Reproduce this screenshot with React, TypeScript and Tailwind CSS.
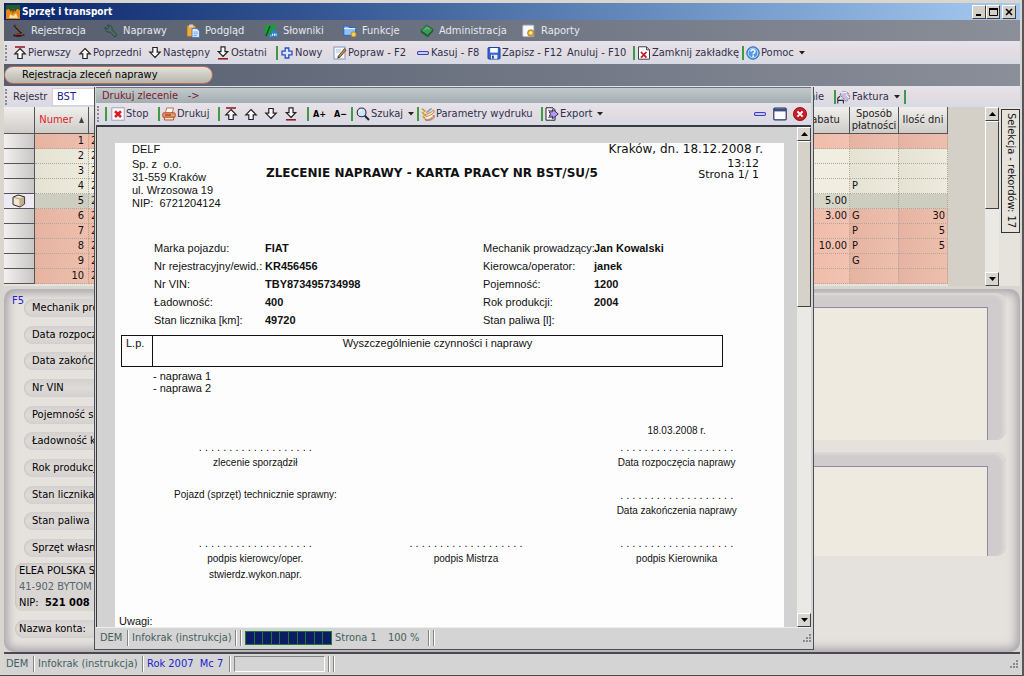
import type { ReactNode } from "react";

/* ---------- icons ---------- */

function Svg({ size = 14, children }: { size?: number; children: ReactNode }) {
  return (
    <svg width={size} height={size} viewBox="0 0 14 14" className="shrink-0" aria-hidden="true">
      {children}
    </svg>
  );
}

const ARROW_UP = "M7 2.5 L12.2 7.8 H9.2 V12.5 H4.8 V7.8 H1.8 Z";
const ARROW_DOWN = "M7 11.5 L12.2 6.2 H9.2 V1.5 H4.8 V6.2 H1.8 Z";

const UpIcon = () => (
  <Svg>
    <path d={ARROW_UP} fill="#fff" stroke="#222" strokeWidth="1.2" />
  </Svg>
);
const DownIcon = () => (
  <Svg>
    <path d={ARROW_DOWN} fill="#fff" stroke="#222" strokeWidth="1.2" />
  </Svg>
);
const FirstIcon = () => (
  <Svg>
    <path d={ARROW_UP} fill="#fff" stroke="#222" strokeWidth="1.2" />
    <path d="M2 1 H12" stroke="#9a1c2a" strokeWidth="1.6" />
  </Svg>
);
const LastIcon = () => (
  <Svg>
    <path d="M7 10.5 L11.7 5.7 H9 V.8 H5 V5.7 H2.3 Z" fill="#fff" stroke="#222" strokeWidth="1.2" />
    <path d="M2 12.8 H12" stroke="#9a1c2a" strokeWidth="1.6" />
  </Svg>
);
const PlusIcon = () => (
  <Svg>
    <path d="M5.2 2 H8.8 V5.2 H12 V8.8 H8.8 V12 H5.2 V8.8 H2 V5.2 H5.2 Z" fill="#d9e6ff" stroke="#2a4fc4" strokeWidth="1.3" />
  </Svg>
);
const MinusIcon = () => (
  <Svg>
    <rect x="1.5" y="5.5" width="11" height="3" rx="1.2" fill="#c8ccff" stroke="#3b3fc0" strokeWidth="1.1" />
  </Svg>
);
const EditIcon = () => (
  <Svg>
    <rect x="1" y="1" width="11" height="12" fill="#f3f8ff" stroke="#8496b4" />
    <path d="M3 4 H8 M3 6 H7" stroke="#9fc0e8" />
    <path d="M5 10.5 L11.5 2.5 L13.2 4 L6.8 11.5 Z" fill="#c9853c" stroke="#59402a" strokeWidth=".8" />
    <path d="M5 10.5 L4.2 12.4 L6.8 11.5 Z" fill="#222" />
  </Svg>
);
const SaveIcon = () => (
  <Svg>
    <rect x="1" y="1.5" width="12" height="11.5" rx="1" fill="#3566cf" stroke="#1f429b" />
    <rect x="3.2" y="2" width="7.6" height="4.6" fill="#fff" />
    <rect x="4" y="8.8" width="6.4" height="4" fill="#e8eefc" />
    <rect x="5" y="9.6" width="1.8" height="3" fill="#1f429b" />
  </Svg>
);
const ClosePageIcon = () => (
  <Svg>
    <path d="M1.5 .8 H9.5 L12.5 3.8 V13.2 H1.5 Z" fill="#fff" stroke="#40414c" />
    <path d="M9.5 .8 V3.8 H12.5" fill="none" stroke="#40414c" />
    <path d="M4 6 L9.5 11.6 M9.5 6 L4 11.6" stroke="#c01822" strokeWidth="1.7" />
  </Svg>
);
const HelpIcon = () => (
  <Svg>
    <circle cx="7" cy="7" r="6.2" fill="#4c9be8" stroke="#2a5da8" strokeWidth="1" />
    <circle cx="7" cy="7" r="4.9" fill="none" stroke="#d6ebff" strokeWidth=".8" />
    <path d="M5 5.6 C5 3.2 9 3.2 9 5.5 C9 6.9 7.1 6.8 7.1 8.4" fill="none" stroke="#fff" strokeWidth="1.4" />
    <circle cx="7.1" cy="10.2" r=".9" fill="#fff" />
  </Svg>
);
const PenIcon = () => (
  <Svg>
    <path d="M2.2 1.2 L9.6 8.8" stroke="#1c1412" strokeWidth="2.2" />
    <path d="M3 1.4 L9.8 8.2" stroke="#d07a4a" strokeWidth="1" />
    <path d="M.8 12 C3 8.6 9 8.4 13 11 C10 13.2 4 13.2 .8 12 Z" fill="#2a1713" />
    <path d="M3 11 C5 9.8 8 9.8 11 11" stroke="#c8502f" fill="none" />
  </Svg>
);
const WrenchIcon = () => (
  <Svg>
    <path d="M1.2 3.2 L3.2 5 L5 3.4 L3.4 1.4 C6.8 .6 8.8 3 8 5.6 L13 10.8 L11 13 L5.8 8 C3.4 8.8 .8 6.6 1.2 3.2 Z" fill="#4f6b66" stroke="#25423b" strokeWidth=".9" />
  </Svg>
);
const ClipboardIcon = () => (
  <Svg>
    <rect x="1" y="1.6" width="8.4" height="11" rx="1" fill="#f0ae38" stroke="#a4661c" strokeWidth=".8" />
    <rect x="3" y=".4" width="4.4" height="2.8" rx="1" fill="#cfd4dc" />
    <path d="M6 4.6 H11 L13.4 7 V13.4 H6 Z" fill="#e8f2ff" stroke="#3f72c8" strokeWidth=".9" />
    <path d="M7.4 8 H12 M7.4 9.8 H12 M7.4 11.6 H11" stroke="#5a8fe0" strokeWidth=".8" />
  </Svg>
);
const DictIcon = () => (
  <Svg>
    <path d="M.6 1 H13.4 L6.6 12.6 L.6 9 Z" fill="#1f9a3c" />
    <path d="M2 12 L6 2" stroke="#0b4f2a" strokeWidth="1.4" />
    <path d="M4.6 13.4 L8 6.4 H13.6 V13.4 Z" fill="#2c7fc8" />
    <path d="M6.4 11.8 H7.4 M8.6 11.8 V9.6 M10.4 11.8 V9.6 M12 11.8 V9.6" stroke="#fff" />
  </Svg>
);
const FunctionsIcon = () => (
  <Svg>
    <path d="M.8 2 H5 L6 3.4 H12.6 V11.4 H.8 Z" fill="#8fc0f8" stroke="#2b62c4" />
    <path d="M1 4.6 H12.4" stroke="#e4f1ff" />
    <circle cx="10.6" cy="10.4" r="2.6" fill="#f2cf5a" stroke="#a8761c" strokeWidth=".8" />
  </Svg>
);
const BookIcon = () => (
  <Svg>
    <path d="M.8 6.6 L6.4 1.2 L13.2 5.4 L7.8 11.4 Z" fill="#3d9a56" stroke="#165a2c" strokeWidth=".9" />
    <path d="M.8 6.6 V8.4 L7.8 13.2 L13.2 7.2 V5.4 L7.8 11.4 Z" fill="#1d5c34" />
    <path d="M4.4 6 L7 3.6 L9.6 5.2" fill="none" stroke="#8fd0a0" strokeWidth=".8" />
  </Svg>
);
const ReportIcon = () => (
  <Svg>
    <rect x=".8" y="1.2" width="11" height="11.4" rx="1" fill="#f7f9ff" stroke="#b4bccc" strokeWidth=".8" />
    <circle cx="8.8" cy="9" r="3.2" fill="#f0b838" stroke="#a06a1c" strokeWidth=".8" />
    <circle cx="8.6" cy="8.8" r="1.2" fill="#fff3c4" />
  </Svg>
);
const StopIcon = () => (
  <Svg>
    <rect x=".8" y=".8" width="12.4" height="12.4" fill="#fff" stroke="#9aa2b4" />
    <path d="M4 4.2 L10 10 M10 4.2 L4 10" stroke="#d81e28" strokeWidth="2.6" />
  </Svg>
);
const PrinterIcon = () => (
  <Svg>
    <path d="M3.4 6 L4.6 1 H11.4 L10.4 6 Z" fill="#fff" stroke="#c2603c" strokeWidth=".9" />
    <rect x=".8" y="5.8" width="12.4" height="4.6" rx="1.2" fill="#ee9a72" stroke="#a84824" strokeWidth=".9" />
    <path d="M2.4 10.2 H11.6 V13 H2.4 Z" fill="#fde2c8" stroke="#a84824" strokeWidth=".9" />
    <path d="M3 8 H9" stroke="#7a2c10" />
  </Svg>
);
const SearchIcon = () => (
  <Svg>
    <circle cx="5.6" cy="5.4" r="4.4" fill="#cfe3fa" stroke="#2b3140" strokeWidth="1.1" />
    <path d="M3.4 5 C3.6 3.6 4.6 3 5.8 3" fill="none" stroke="#fff" />
    <path d="M8.8 8.8 L13 13" stroke="#1d2a4a" strokeWidth="2" />
  </Svg>
);
const ParamsIcon = () => (
  <Svg>
    <path d="M1 1.6 L4.4 4.6 M1.2 5 L4 8.4 M2 9 L4 12" stroke="#d4a020" strokeWidth="1.6" />
    <path d="M4 8 C6 6.6 10 6 12.6 3 L13.2 5 C11 8 8 9.2 5 9.4 Z" fill="#f6e3a4" stroke="#b8641c" strokeWidth=".7" />
    <path d="M4 12.8 C7 13.4 11 12 13 8.2 L13.2 10.6 C11 13.4 7 14 4 12.8 Z" fill="#f3c0a8" stroke="#b04a2c" strokeWidth=".7" />
    <path d="M5.4 5.6 L10.6 1.4" stroke="#8898b8" strokeWidth="1.4" />
    <path d="M5.6 11 L11 8.6" stroke="#fff" />
  </Svg>
);
const ExportIcon = () => (
  <Svg>
    <path d="M1 .8 H8 L10 2.8 V13.2 H1 Z" fill="#fff" stroke="#222" />
    <path d="M3 3.4 H7 M3 10.6 H8" stroke="#555" strokeWidth=".8" />
    <path d="M4 4.8 H7.6 V2.2 L13.2 7 L7.6 11.8 V9.2 H4 L5.6 7 Z" fill="#b59cf0" stroke="#2a1a5c" strokeWidth=".9" />
  </Svg>
);
const InvoiceIcon = () => (
  <Svg>
    <path d="M3 5 C4 1 9 .4 11.4 3.4 L13 8 L9 11.6 L6 8 Z" fill="#c6bce0" stroke="#6a5f86" strokeWidth=".8" strokeDasharray="2 1" />
    <path d="M.8 13.4 V8 L3 6.2 M.8 10.4 H6.4 V13.4" fill="none" stroke="#2a2438" strokeWidth="1.1" />
    <path d="M4 3 L10 2 M9 4.5 L12 8" stroke="#fff" />
  </Svg>
);
const WindowIcon = () => (
  <Svg>
    <rect x=".8" y="1.2" width="12.4" height="11.6" rx="1" fill="#fbfcff" stroke="#2a3560" strokeWidth="1.2" />
    <path d="M1 3.2 H13" stroke="#3b4d88" strokeWidth="2.4" />
  </Svg>
);
const CloseRedIcon = () => (
  <Svg>
    <circle cx="7" cy="7" r="6.6" fill="#c81e28" stroke="#7c0e16" strokeWidth=".8" />
    <path d="M4.4 4.4 L9.6 9.6 M9.6 4.4 L4.4 9.6" stroke="#fff" strokeWidth="2" />
  </Svg>
);
const BoxIcon = () => (
  <Svg>
    <path d="M1 3.2 L6 1 L12.6 2.8 V10 L8 13 L1 10.6 Z" fill="#f2e8d2" stroke="#2b2620" />
    <path d="M1 3.2 L8 5 V13 M8 5 L12.6 2.8" fill="none" stroke="#8b7c60" strokeWidth=".7" />
    <path d="M8.4 5.2 L12.2 3.4 V9.8 L8.4 12.2 Z" fill="#c2ac84" />
  </Svg>
);
const AppIcon = () => (
  <Svg>
    <rect width="14" height="14" fill="#e8861c" />
    <path d="M0 0 H14 V5 L11 4 L9 7 L7 3 L5 7 L3 4 L0 5 Z" fill="#215c2a" />
    <path d="M3 13 L4 9 L7 11 L10 8 L12 13 Z" fill="#fbe49a" />
    <path d="M6 4 L7 9 L8 4 Z" fill="#5a2c10" />
  </Svg>
);

/* ---------- small parts ---------- */

const Grip = () => (
  <span className="ml-px mr-1 h-4 w-1 shrink-0 border-l-2 border-dotted border-[#8a8a94]" aria-hidden="true" />
);
const Sep = () => <span className="h-3.5 w-0.5 shrink-0 bg-[#3f9a48]" aria-hidden="true" />;
const Caret = () => (
  <svg width="6" height="4" viewBox="0 0 6 4" className="ml-1 shrink-0" aria-hidden="true">
    <path d="M0 0 H6 L3 3.6 Z" fill="#222" />
  </svg>
);
const StatusSep = () => <span className="h-4 w-0.5 shrink-0 border-l border-r border-l-[#85857f] border-r-white" aria-hidden="true" />;

function Tool({ icon, label, width, caret, name }: { icon?: ReactNode; label?: string; width: string; caret?: boolean; name?: string }) {
  return (
    <button type="button" aria-label={name} className={`flex shrink-0 items-center gap-px whitespace-nowrap text-left ${width}`}>
      {icon}
      {label && <span>{label}</span>}
      {caret && <Caret />}
    </button>
  );
}

function ScrollButton({ down }: { down?: boolean }) {
  return (
    <button
      type="button"
      aria-label={down ? "W dół" : "W górę"}
      className="flex h-3.5 w-full shrink-0 items-center justify-center border border-b-[#404040] border-l-white border-r-[#404040] border-t-white bg-[#d8d5ce]"
    >
      <svg width="7" height="4" viewBox="0 0 7 4" aria-hidden="true">
        <path d={down ? "M0 0 H7 L3.5 4 Z" : "M0 4 H7 L3.5 0 Z"} fill="#000" />
      </svg>
    </button>
  );
}

function ScrollBar({ thumb }: { thumb: string }) {
  return (
    <div className="flex w-3.5 shrink-0 flex-col bg-[#ebe9e5]">
      <ScrollButton />
      <div className={`border border-b-[#404040] border-l-white border-r-[#404040] border-t-white bg-[#d6d2ca] ${thumb}`} />
      <div className="flex-1" />
      <ScrollButton down />
    </div>
  );
}

function ResizeGrip() {
  return (
    <svg width="10" height="10" viewBox="0 0 10 10" className="shrink-0" aria-hidden="true">
      <path d="M8 1h2v2h-2z M5 4h2v2h-2z M8 4h2v2h-2z M2 7h2v2h-2z M5 7h2v2h-2z M8 7h2v2h-2z" fill="#8a8a92" />
    </svg>
  );
}

/* ---------- main window ---------- */

const MENU = [
  { label: "Rejestracja", icon: <PenIcon />, width: "w-[92px]" },
  { label: "Naprawy", icon: <WrenchIcon />, width: "w-[82px]" },
  { label: "Podgląd", icon: <ClipboardIcon />, width: "w-[78px]" },
  { label: "Słowniki", icon: <DictIcon />, width: "w-[79px]" },
  { label: "Funkcje", icon: <FunctionsIcon />, width: "w-[77px]" },
  { label: "Administracja", icon: <BookIcon />, width: "w-[102px]" },
  { label: "Raporty", icon: <ReportIcon />, width: "w-[80px]" },
];

function TitleBar() {
  const btn =
    "flex h-3.5 w-[14px] items-center justify-center border border-b-[#404040] border-l-white border-r-[#404040] border-t-white bg-[#d4d0c8]";
  return (
    <header className="flex h-[17px] items-center bg-linear-to-r from-[#0a246a] to-[#a6caf0] pl-0.5 pr-1">
      <AppIcon />
      <h1 className="ml-0.5 flex-1 text-[10px] font-bold text-white">Sprzęt i transport</h1>
      <button type="button" aria-label="Minimalizuj" className={btn}>
        <svg width="8" height="8" aria-hidden="true"><path d="M1 7 H6" stroke="#000" strokeWidth="2" /></svg>
      </button>
      <button type="button" aria-label="Maksymalizuj" className={btn}>
        <svg width="9" height="8" aria-hidden="true"><path d="M.5 1 H8.5 V7.5 H.5 Z" fill="none" stroke="#000" /><path d="M0 1 H9" stroke="#000" strokeWidth="2" /></svg>
      </button>
      <button type="button" aria-label="Zamknij" className={`ml-0.5 ${btn}`}>
        <svg width="8" height="8" aria-hidden="true"><path d="M1 1 L7 7 M7 1 L1 7" stroke="#000" strokeWidth="1.6" /></svg>
      </button>
    </header>
  );
}

const BAR = "flex shrink-0 items-center bg-linear-to-b from-[#e6e3ec] via-[#e3dce0] to-[#d6dae6] text-[#2b3150]";

function MainToolbar() {
  return (
    <div className={`h-[23px] ${BAR}`}>
      <Grip />
      <Tool icon={<FirstIcon />} label="Pierwszy" width="w-[65px]" />
      <Tool icon={<UpIcon />} label="Poprzedni" width="w-[70px]" />
      <Tool icon={<DownIcon />} label="Następny" width="w-[68px]" />
      <Tool icon={<LastIcon />} label="Ostatni" width="w-[60px]" />
      <Sep />
      <Tool icon={<PlusIcon />} label="Nowy" width="ml-0.5 w-[53px]" />
      <Tool icon={<EditIcon />} label="Popraw - F2" width="w-[83px]" />
      <Tool icon={<MinusIcon />} label="Kasuj - F8" width="w-[71px]" />
      <Tool icon={<SaveIcon />} label="Zapisz - F12" width="w-[80px]" />
      <Tool label="Anuluj - F10" width="w-[66px]" />
      <Sep />
      <Tool icon={<ClosePageIcon />} label="Zamknij zakładkę" width="ml-0.5 w-[105px]" />
      <Sep />
      <Tool icon={<HelpIcon />} label="Pomoc" width="ml-0.5" caret />
    </div>
  );
}

type Row = { n: number; discount?: string; pay?: string; days?: string; tone: "salmon" | "cream" | "selected" };

const ROWS: Row[] = [
  { n: 1, tone: "salmon" },
  { n: 2, tone: "cream" },
  { n: 3, tone: "cream" },
  { n: 4, tone: "cream", pay: "P" },
  { n: 5, tone: "selected", discount: "5.00" },
  { n: 6, tone: "salmon", discount: "3.00", pay: "G", days: "30" },
  { n: 7, tone: "salmon", pay: "P", days: "5" },
  { n: 8, tone: "salmon", discount: "10.00", pay: "P", days: "5" },
  { n: 9, tone: "salmon", pay: "G" },
  { n: 10, tone: "salmon" },
];

const TONE = {
  salmon: { a: "bg-linear-to-r from-[#f0baa6] to-[#f2c2b2]", b: "bg-linear-to-r from-[#e6b3a0] to-[#eebfae]" },
  cream: { a: "bg-[#f0eee0]", b: "bg-linear-to-r from-[#e4e2d3] to-[#edebdd]" },
  selected: { a: "bg-[#d6d6c8]", b: "bg-[#cdcdc0]" },
};

function OrdersTable() {
  const cell = "overflow-hidden border-b border-r border-dotted border-[#b0a79c] p-0 text-[#111]";
  const head =
    "h-[27px] overflow-hidden border-b border-r border-[#55555a] bg-linear-to-b from-[#f0efec] to-[#cfccc8] p-0 text-center font-normal leading-[12px]";
  return (
    <table className="w-full table-fixed border-separate border-spacing-0">
      <colgroup>
        <col className="w-[31px]" />
        <col className="w-[54px]" />
        <col />
        <col className="w-[52px]" />
        <col className="w-[49px]" />
        <col className="w-[49px]" />
      </colgroup>
      <thead>
        <tr>
          <th className={head} aria-label="Wybór" />
          <th className={`${head} text-[#e01c1c]`}>
            <span className="flex items-center justify-center gap-1.5">
              Numer
              <svg width="5" height="6" viewBox="0 0 5 6" aria-hidden="true"><path d="M0 6 L2.5 0 L5 6 Z" fill="#444" /></svg>
            </span>
          </th>
          <th className={head} aria-label="Data" />
          <th className={`${head} text-[#222]`}>rabatu</th>
          <th className={`${head} text-[#222]`}>Sposób płatności</th>
          <th className={`${head} text-[#222]`}>Ilość dni</th>
        </tr>
      </thead>
      <tbody>
        {ROWS.map((r) => (
          <tr key={r.n} className="h-[15px] leading-[14px]">
            <td className="border-b border-r border-[#55555a] bg-linear-to-r from-[#f2f1ef] to-[#c9c7c6] p-0">
              {r.tone === "selected" && (
                <span className="flex h-3.5 items-center justify-center bg-[#eeeaf4]"><BoxIcon /></span>
              )}
            </td>
            <td className={`${cell} pr-1 text-right ${TONE[r.tone].b}`}>{r.n}</td>
            <td className={`${cell} pl-0.5 ${TONE[r.tone].a}`}>2</td>
            <td className={`${cell} pr-0.5 text-right ${TONE[r.tone].a}`}>{r.discount}</td>
            <td className={`${cell} pl-0.5 ${TONE[r.tone].b}`}>{r.pay}</td>
            <td className={`${cell} pr-0.5 text-right ${TONE[r.tone].b}`}>{r.days}</td>
          </tr>
        ))}
      </tbody>
    </table>
  );
}

const FIELDS = [
  "Mechanik prowadzący",
  "Data rozpoczęcia",
  "Data zakończenia",
  "Nr VIN",
  "Pojemność silnika",
  "Ładowność kg",
  "Rok produkcji",
  "Stan licznika",
  "Stan paliwa",
  "Sprzęt własny",
];

const PILL = "rounded-l-full bg-linear-to-b from-[#d5d1d0] via-[#dedad7] to-[#d5d1d0] shadow-[inset_1px_0_1px_#c6c2c2]";
const MEMO = "flex rounded-[10px] bg-[#d0cccd] pr-[18px] pt-3.5 shadow-[inset_-3px_2px_3px_#dedad8,inset_-1px_0_0_#c4c0c0]";
const MEMO_FIELD = "flex-1 resize-none border-r border-t border-[#8f8aa4] bg-[#eeeadf] outline-none";

function DetailsPanel() {
  return (
    <section className="mt-[3px] flex flex-1 rounded-[10px] bg-[#e5e1dc] shadow-[inset_0_0_9px_4px_#a9a7ae]">
      <div className="relative flex w-[180px] shrink-0 flex-col pb-3.5 pl-[11px] pt-2.5 text-black">
        <span className="absolute left-2 top-1 leading-4 text-[#2222d0]">F5</span>
        <div className="ml-[9px] flex h-[258px] flex-col justify-between">
          {FIELDS.map((f) => (
            <div key={f} className={`h-[18px] overflow-hidden whitespace-nowrap pl-2 leading-[18px] ${PILL}`}>{f}</div>
          ))}
        </div>
        <div className="mt-1.5 rounded-lg bg-[#d9d5d3] pl-1 leading-4 shadow-[inset_1px_1px_2px_#c6c2c2]">
          <p>ELEA POLSKA S</p>
          <p className="text-[#56656c]">41-902 BYTOM</p>
          <p className="whitespace-pre">NIP:  <b>521 008</b></p>
        </div>
        <div className={`mt-[9px] h-[18px] pl-1 leading-[18px] ${PILL}`}>Nazwa konta:</div>
      </div>
      <div className="flex flex-1 flex-col pb-[96px] pr-3.5 pt-1">
        <div className={`h-[147px] shrink-0 ${MEMO}`}>
          <textarea aria-label="Opis" className={MEMO_FIELD} />
        </div>
        <div className={`mt-3 flex-1 ${MEMO}`}>
          <textarea aria-label="Uwagi" className={MEMO_FIELD} />
        </div>
      </div>
    </section>
  );
}

/* ---------- print preview ---------- */

const VEHICLE = [
  ["Marka pojazdu:", "FIAT"],
  ["Nr rejestracyjny/ewid.:", "KR456456"],
  ["Nr VIN:", "TBY873495734998"],
  ["Ładowność:", "400"],
  ["Stan licznika [km]:", "49720"],
];
const PEOPLE = [
  ["Mechanik prowadzący:", "Jan Kowalski"],
  ["Kierowca/operator:", "janek"],
  ["Pojemność:", "1200"],
  ["Rok produkcji:", "2004"],
  ["Stan paliwa [l]:", ""],
];

function Facts({ rows }: { rows: string[][] }) {
  return (
    <dl className="grid grid-cols-[111px_1fr] leading-[18px]">
      {rows.map(([k, v]) => (
        <div key={k} className="contents">
          <dt className="whitespace-nowrap">{k}</dt>
          <dd className="font-bold">{v}</dd>
        </div>
      ))}
    </dl>
  );
}

const DOTS = ". . . . . . . . . . . . . . . . . . .";
const Dots = () => <p className="whitespace-nowrap pb-0.5 text-[11px] leading-[14px]">{DOTS}</p>;

function Document() {
  return (
    <article className="ml-[18px] mr-[13px] mt-4 flex-1 bg-[#fdfdfd] font-['Liberation_Sans',sans-serif] text-[11px] text-[#111]">
      <div className="flex h-24 justify-between pl-[17px] pr-[21px]">
        <address className="w-[134px] whitespace-pre not-italic leading-[13px]">
          <p className="mb-0.5">DELF</p>
          <p>Sp. z  o.o.</p>
          <p>31-559 Kraków</p>
          <p>ul. Wrzosowa 19</p>
          <p>NIP:  6721204124</p>
        </address>
        <h2 className="flex-1 whitespace-nowrap pt-[23px] font-['DejaVu_Sans',sans-serif] text-[12px] font-bold leading-[14px]">
          ZLECENIE NAPRAWY - KARTA PRACY NR BST/SU/5
        </h2>
        <div className="whitespace-nowrap text-right font-['DejaVu_Sans',sans-serif] text-[11px] leading-[11px]">
          <p className="pb-[3px] text-[12px] leading-[12px]">Kraków, dn. 18.12.2008 r.</p>
          <p className="pr-1">13:12</p>
          <p className="pr-1">Strona 1/ 1</p>
        </div>
      </div>

      <div className="grid grid-cols-[329px_1fr] pl-[39px]">
        <Facts rows={VEHICLE} />
        <Facts rows={PEOPLE} />
      </div>

      <table className="ml-1.5 mt-1.5 h-8 w-[602px] border-collapse">
        <thead>
          <tr>
            <th className="w-[31px] border border-[#111] p-0 pl-1 text-left align-top font-normal leading-[14px]">L.p.</th>
            <th className="border border-[#111] p-0 text-center align-top font-normal leading-[14px]">
              Wyszczególnienie czynności i naprawy
            </th>
          </tr>
        </thead>
      </table>
      <ul className="ml-[38px] mt-[3px] leading-[12px]">
        <li>- naprawa 1</li>
        <li>- naprawa 2</li>
      </ul>

      <div className="ml-[35px] mr-0.5 mt-[30px] grid grid-cols-3 text-center text-[10px] leading-[14px]">
        <div className="pt-4">
          <Dots />
          <p>zlecenie sporządził</p>
        </div>
        <div />
        <div>
          <p className="pb-0.5">18.03.2008 r.</p>
          <Dots />
          <p>Data rozpoczęcia naprawy</p>
        </div>
        <div className="col-span-2 h-12 pl-6 pt-[18px] text-left">Pojazd (sprzęt) technicznie sprawny:</div>
        <div className="h-12 pt-[18px]">
          <Dots />
          <p>Data zakończenia naprawy</p>
        </div>
        <div className="pt-[18px]">
          <Dots />
          <p>podpis kierowcy/oper.</p>
          <p className="pt-0.5">stwierdz.wykon.napr.</p>
        </div>
        <div className="pt-[18px]">
          <Dots />
          <p>podpis Mistrza</p>
        </div>
        <div className="pt-[18px]">
          <Dots />
          <p>podpis Kierownika</p>
        </div>
      </div>
      <p className="ml-1 mt-[33px] leading-[12px]">Uwagi:</p>
    </article>
  );
}

function PrintWindow() {
  return (
    <section className="absolute bottom-[25px] left-[94px] right-[208px] top-[87px] flex flex-col overflow-hidden border-x border-b border-[#4a4e56] bg-[#d4d4d4] pb-px pl-px pr-0.5">
      <h2 className="h-4 shrink-0 whitespace-pre border-t border-[#6c7478] bg-linear-to-b from-[#c2cacc] to-[#a3adb0] pl-1.5 leading-[15px] text-[#7c1c2c]">
        Drukuj zlecenie   -&gt;
      </h2>
      <div className={`h-6 border-b-2 border-[#3a3a40] ${BAR}`}>
        <Grip />
        <Sep />
        <Tool icon={<StopIcon />} label="Stop" width="ml-1 w-[47px]" />
        <Sep />
        <Tool icon={<PrinterIcon />} label="Drukuj" width="ml-0.5 w-[56px]" />
        <Sep />
        <Tool icon={<FirstIcon />} name="Pierwsza strona" width="ml-1 w-5" />
        <Tool icon={<UpIcon />} name="Poprzednia strona" width="w-5" />
        <Tool icon={<DownIcon />} name="Następna strona" width="w-5" />
        <Tool icon={<LastIcon />} name="Ostatnia strona" width="w-[23px]" />
        <Sep />
        <button type="button" className="ml-1 w-[21px] text-left text-[9px] font-bold text-black">A+</button>
        <button type="button" className="w-[17px] text-left text-[9px] font-bold text-black">A−</button>
        <Sep />
        <Tool icon={<SearchIcon />} label="Szukaj" width="ml-[3px] w-[61px]" caret />
        <Sep />
        <Tool icon={<ParamsIcon />} label="Parametry wydruku" width="ml-0.5 w-[120px]" />
        <Sep />
        <Tool icon={<ExportIcon />} label="Export" width="ml-0.5" caret />
        <div className="ml-auto flex gap-1.5 pr-1">
          <Tool icon={<MinusIcon />} name="Minimalizuj podgląd" width="w-3.5" />
          <Tool icon={<WindowIcon />} name="Maksymalizuj podgląd" width="w-3.5" />
          <Tool icon={<CloseRedIcon />} name="Zamknij podgląd" width="w-3.5" />
        </div>
      </div>
      <div className="flex min-h-0 flex-1">
        <div className="flex min-w-0 flex-1 flex-col overflow-hidden border-l border-[#3a3a40] bg-[#d2d2d2]">
          <Document />
        </div>
        <ScrollBar thumb="h-[166px]" />
      </div>
      <footer className="flex h-[21px] shrink-0 items-center gap-[3px] border-t border-[#ededed] pl-1 text-[#46605c]">
        <span className="w-6">DEM</span>
        <StatusSep />
        <span className="w-[100px] whitespace-nowrap">Infokrak (instrukcja)</span>
        <StatusSep />
        <StatusSep />
        <div className="flex h-3.5 w-[87px] gap-px bg-[#1d7a34] p-px" role="progressbar" aria-label="Postęp wydruku" aria-valuenow={100}>
          {Array.from({ length: 10 }, (_, i) => (
            <span key={i} className="flex-1 bg-[#0e1c66]" />
          ))}
        </div>
        <span className="w-[50px] whitespace-nowrap">Strona 1</span>
        <span className="w-[37px] whitespace-nowrap">100 %</span>
        <StatusSep />
        <StatusSep />
        <span className="ml-auto"><ResizeGrip /></span>
      </footer>
    </section>
  );
}

/* ---------- page ---------- */

export default function App() {
  return (
    <div className="relative flex min-h-screen flex-col overflow-hidden border-b-2 border-r-2 border-b-[#4a4a4a] border-r-[#55555a] bg-[#d9d6d0] pb-px pl-1 pr-0.5 pt-[3px] font-['DejaVu_Sans_Condensed','DejaVu_Sans',sans-serif] text-[11px] leading-[14px]">
      <TitleBar />
      <nav className="flex h-[21px] shrink-0 items-center bg-linear-to-r from-[#555d6e] to-[#8a8f99] pl-2 text-[#e6e8ee]">
        {MENU.map((m) => (
          <button key={m.label} type="button" className={`flex shrink-0 items-center gap-[5px] ${m.width}`}>
            {m.icon}
            <span>{m.label}</span>
          </button>
        ))}
      </nav>
      <MainToolbar />
      <div className="flex h-[22px] shrink-0 items-center bg-linear-to-r from-[#555d6e] to-[#8a8f99]">
        <button
          type="button"
          className="h-[18px] w-[209px] rounded-full border border-[#b86a5c] bg-linear-to-b from-[#e4e2d8] to-[#b6b6ae] pl-[17px] text-left leading-4 text-black"
        >
          Rejestracja zleceń naprawy
        </button>
      </div>
      <div className={`h-[21px] ${BAR}`}>
        <Grip />
        <label htmlFor="rejestr" className="w-[39px]">Rejestr</label>
        <input id="rejestr" defaultValue="BST" className="h-[18px] w-[60px] border border-[#d2d0d8] bg-white px-1 text-[#1c1c8c] outline-none" />
        <div className="ml-auto flex w-[241px] items-center">
          <span className="w-[45px] text-right">Zlecenie</span>
          <span className="w-[10px]" />
          <Sep />
          <Tool icon={<InvoiceIcon />} label="Faktura" width="ml-px w-[67px]" caret />
          <Sep />
        </div>
      </div>
      <div className="flex h-[179px] shrink-0 bg-[#e6e2dc]">
        <div className="min-w-0 flex-1 overflow-hidden">
          <OrdersTable />
        </div>
        <div className="w-[37px] shrink-0 bg-[#d4d0c8]" />
        <ScrollBar thumb="h-[88px]" />
        <div className="ml-0.5 w-[19px] pt-0.5">
          <button
            type="button"
            className="h-[124px] w-full whitespace-nowrap border border-[#333] bg-[#e6e2dc] text-center leading-4 text-[#111] [writing-mode:vertical-rl]"
          >
            Selekcja - rekordów: 17
          </button>
        </div>
      </div>
      <DetailsPanel />
      <footer className="flex h-[22px] shrink-0 items-center gap-[3px] border-t-2 border-[#4a4a4e] bg-[#d4d4d4] px-0.5 text-[#46605c]">
        <span className="w-6">DEM</span>
        <StatusSep />
        <span className="w-[101px] whitespace-nowrap">Infokrak (instrukcja)</span>
        <StatusSep />
        <span className="w-[79px] whitespace-pre text-[#2222d0]">Rok 2007  Mc 7</span>
        <StatusSep />
        <span className="h-4 w-[91px] border border-b-white border-l-[#85857f] border-r-white border-t-[#85857f]" />
        <StatusSep />
        <StatusSep />
        <span className="ml-auto"><ResizeGrip /></span>
      </footer>
      <PrintWindow />
    </div>
  );
}
